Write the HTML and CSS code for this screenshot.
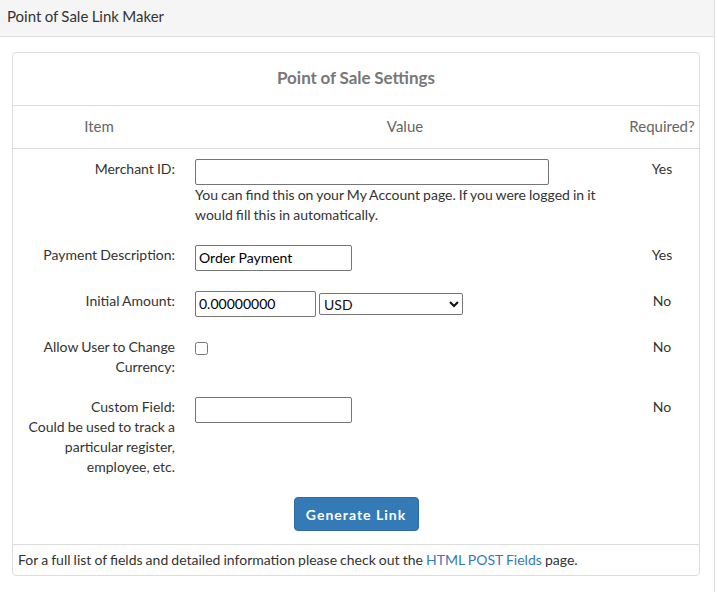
FILE: index.html
```html
<!DOCTYPE html>
<html>
<head>
<meta charset="utf-8">
<link rel="stylesheet" href="styles.css">
</head>
<body>
<div class="outer">
  <div class="outer-head">Point of Sale Link Maker</div>
  <div class="outer-body">
    <div class="panel">
      <div class="panel-title">Point of Sale Settings</div>
      <table class="settings">
        <colgroup>
          <col class="c-item">
          <col class="c-value">
          <col class="c-req">
        </colgroup>
        <thead>
          <tr><th>Item</th><th>Value</th><th>Required?</th></tr>
        </thead>
        <tbody>
          <tr>
            <td class="lbl">Merchant ID:</td>
            <td class="val"><input type="text" class="inp wide"><div class="hint">You can find this on your My Account page. If you were logged in it would fill this in automatically.</div></td>
            <td class="req">Yes</td>
          </tr>
          <tr>
            <td class="lbl">Payment Description:</td>
            <td class="val"><input type="text" class="inp mid" value="Order Payment"></td>
            <td class="req">Yes</td>
          </tr>
          <tr>
            <td class="lbl">Initial Amount:</td>
            <td class="val"><div class="amount"><input type="text" class="inp amt" value="0.00000000"><select class="sel"><option>USD</option></select></div></td>
            <td class="req">No</td>
          </tr>
          <tr>
            <td class="lbl">Allow User to Change Currency:</td>
            <td class="val"><input type="checkbox" class="chk"></td>
            <td class="req">No</td>
          </tr>
          <tr>
            <td class="lbl">Custom Field:<br>Could be used to track a particular register, employee, etc.</td>
            <td class="val"><input type="text" class="inp mid"></td>
            <td class="req">No</td>
          </tr>
          <tr>
            <td colspan="3" class="btn-cell"><button class="btn" type="button">Generate Link</button></td>
          </tr>
        </tbody>
      </table>
      <div class="panel-foot">For a full list of fields and detailed information please check out the <a href="#" class="lnk">HTML POST Fields</a> page.</div>
    </div>
  </div>
</div>
</body>
</html>
```

FILE: styles.css
```css
html, body {
  margin: 0;
  padding: 0;
  background: #fff;
}
body {
  font-family: Lato, "Open Sans", sans-serif;
  font-size: 14px;
  line-height: 20px;
  color: #333;
  word-spacing: -0.5px;
}
.outer {
  width: 715px;
  border-right: 1px solid #ddd;
  min-height: 592px;
  box-sizing: border-box;
}
.outer-head {
  background: #f5f5f5;
  border-bottom: 1px solid #ddd;
  height: 37px;
  box-sizing: border-box;
  padding: 6px 7px;
  font-size: 15px;
  color: #333;
}
.outer-body {
  padding: 15px 15px 0 12px;
}
.panel {
  width: 688px;
  box-sizing: border-box;
  border: 1px solid #ddd;
  border-radius: 4px;
}
.panel-title {
  text-align: center;
  font-weight: bold;
  font-size: 17px;
  line-height: 22px;
  color: #777;
  padding: 14px 0 16px;
  border-bottom: 1px solid #ddd;
}
.settings {
  width: 100%;
  border-collapse: collapse;
  table-layout: fixed;
}
.c-item { width: 172px; }
.c-req { width: 74px; }
.settings th {
  font-weight: normal;
  font-size: 15px;
  color: #666;
  text-align: center;
  padding: 10px 0 12px;
  border-bottom: 1px solid #ddd;
}
.settings td {
  vertical-align: top;
  padding: 10px 10px;
}
.settings td.lbl {
  text-align: right;
  padding-left: 4px;
}
.settings td.val {
  padding-left: 10px;
  padding-right: 10px;
}
.settings td.req {
  text-align: center;
  padding-left: 0;
  padding-right: 0;
}
.inp {
  display: block;
  box-sizing: border-box;
  height: 26px;
  margin: 0;
  padding: 1px 3px 3px;
  border: 1px solid #767676;
  border-radius: 2px;
  font-family: Lato, "Open Sans", sans-serif;
  font-size: 14px;
  color: #000;
}
.wide { width: 354px; }
.mid { width: 157px; }
.amount {
  display: flex;
  align-items: center;
  gap: 3px;
  height: 26px;
}
.amt { width: 121px; }
.sel {
  width: 144px;
  height: 22px;
  margin: 0;
  font-family: Lato, "Open Sans", sans-serif;
  font-size: 14px;
  color: #111;
  border: 1px solid #767676;
  border-radius: 2px;
  background: #fff;
}
.hint {
  font-size: 14px;
  line-height: 20px;
  color: #333;
}
.chk {
  display: block;
  width: 13px;
  height: 13px;
  margin: 5px 0 0 0;
}
.settings td.btn-cell {
  text-align: center;
  padding: 10px 0 13px;
}
.btn {
  display: inline-block;
  width: 125px;
  height: 34px;
  padding: 0;
  background: #337ab7;
  border: 1px solid #2e6da4;
  border-radius: 4px;
  color: #fff;
  font-family: Lato, "Open Sans", sans-serif;
  font-size: 14px;
  font-weight: bold;
  letter-spacing: 1px;
  word-spacing: 0;
}
.panel-foot {
  border-top: 1px solid #ddd;
  padding: 5px 5px;
  font-size: 14px;
}
.lnk {
  color: #337ab7;
  text-decoration: none;
}
```
